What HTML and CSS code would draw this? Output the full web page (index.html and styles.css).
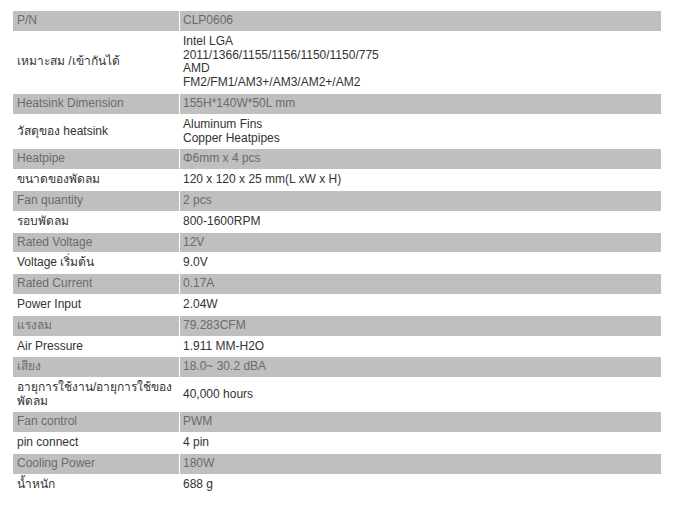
FILE: index.html
```html
<!DOCTYPE html>
<html lang="th">
<head>
<meta charset="utf-8">
<title>CLP0606 Specifications</title>
<link rel="stylesheet" href="styles.css">
</head>
<body>
<div class="wrap">
<table class="spec">
<tbody>
<tr class="alt"><td class="k">P/N</td><td class="v">CLP0606</td></tr>
<tr><td class="k"><span class="th">เหมาะสม /เข้ากันได้</span></td><td class="v">Intel LGA<br>2011/1366/1155/1156/1150/1150/775<br>AMD<br>FM2/FM1/AM3+/AM3/AM2+/AM2</td></tr>
<tr class="alt"><td class="k">Heatsink Dimension</td><td class="v">155H*140W*50L mm</td></tr>
<tr><td class="k"><span class="th">วัสดุของ heatsink</span></td><td class="v">Aluminum Fins<br>Copper Heatpipes</td></tr>
<tr class="alt"><td class="k">Heatpipe</td><td class="v">Φ6mm x 4 pcs</td></tr>
<tr><td class="k"><span class="th">ขนาดของพัดลม</span></td><td class="v">120 x 120 x 25 mm(L xW x H)</td></tr>
<tr class="alt"><td class="k">Fan quantity</td><td class="v">2 pcs</td></tr>
<tr><td class="k"><span class="th">รอบพัดลม</span></td><td class="v">800-1600RPM</td></tr>
<tr class="alt"><td class="k">Rated Voltage</td><td class="v">12V</td></tr>
<tr><td class="k"><span class="th">Voltage เริ่มต้น</span></td><td class="v">9.0V</td></tr>
<tr class="alt"><td class="k">Rated Current</td><td class="v">0.17A</td></tr>
<tr><td class="k">Power Input</td><td class="v">2.04W</td></tr>
<tr class="alt"><td class="k"><span class="th">แรงลม</span></td><td class="v">79.283CFM</td></tr>
<tr><td class="k">Air Pressure</td><td class="v">1.911 MM-H2O</td></tr>
<tr class="alt"><td class="k"><span class="th">เสียง</span></td><td class="v">18.0~ 30.2 dBA</td></tr>
<tr><td class="k"><span class="th th2">อายุการใช้งาน/อายุการใช้ของพัดลม</span></td><td class="v">40,000 hours</td></tr>
<tr class="alt"><td class="k">Fan control</td><td class="v">PWM</td></tr>
<tr><td class="k">pin connect</td><td class="v">4 pin</td></tr>
<tr class="alt"><td class="k">Cooling Power</td><td class="v">180W</td></tr>
<tr><td class="k"><span class="th">น้ำหนัก</span></td><td class="v">688 g</td></tr>
</tbody>
</table>
</div>
</body>
</html>
```

FILE: styles.css
```css
html, body {
  margin: 0;
  padding: 0;
  background: #ffffff;
}

.wrap {
  padding: 10px 0 0 12px;
}

.spec {
  width: 650px;
  border-collapse: separate;
  border-spacing: 1px;
  table-layout: fixed;
  font-family: "Liberation Sans", Arial, sans-serif;
  font-size: 12px;
  line-height: 13.8px;
  color: #333333;
}

.spec td {
  padding: 3px 4px 3px 4px;
  vertical-align: middle;
  text-align: left;
}

.spec td.k {
  width: 158px;
}

.spec td.v {
  padding-left: 3px;
}

.spec .th {
  display: inline-block;
  height: 13px;
  line-height: 13.8px;
  vertical-align: top;
}

.spec .th2 {
  height: 27px;
}

.spec tr.alt td {
  background: #bfbfbf;
  color: #6b6b6b;
}
```
